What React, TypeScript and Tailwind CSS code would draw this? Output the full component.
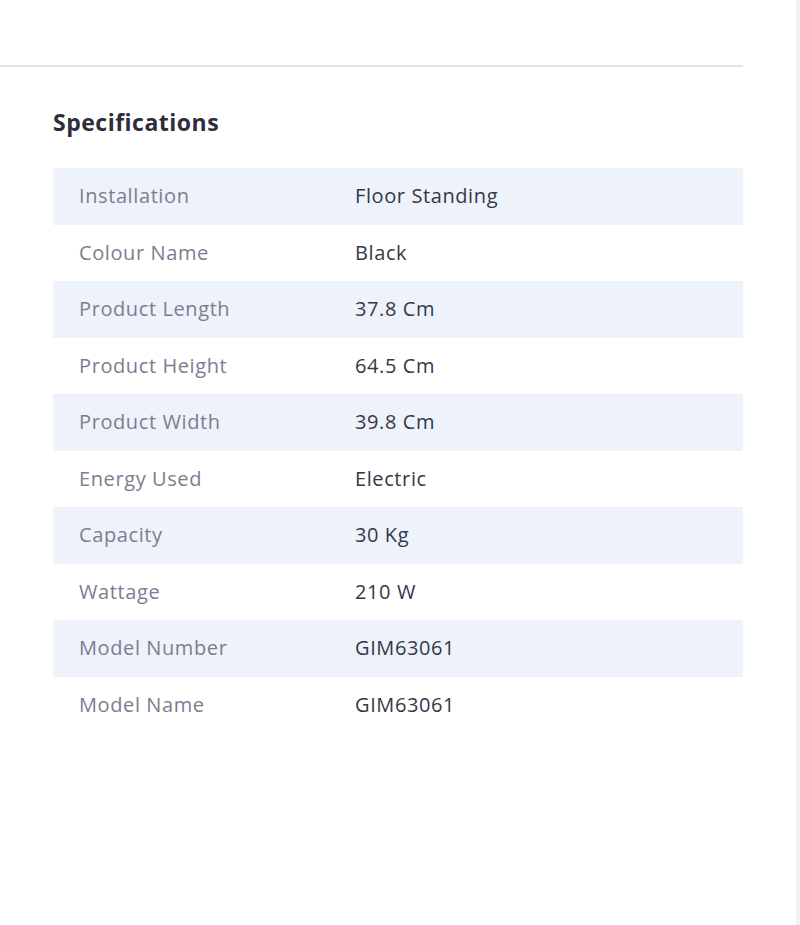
import React from 'react';

const specs: [string, string][] = [
    ['Installation', 'Floor Standing'],
    ['Colour Name', 'Black'],
    ['Product Length', '37.8 Cm'],
    ['Product Height', '64.5 Cm'],
    ['Product Width', '39.8 Cm'],
    ['Energy Used', 'Electric'],
    ['Capacity', '30 Kg'],
    ['Wattage', '210 W'],
    ['Model Number', 'GIM63061'],
    ['Model Name', 'GIM63061'],
];

export default function App() {
    return (
        <div className="flex h-[925px] w-[800px] bg-white font-['Open_Sans',sans-serif]">
            <div className="flex-1">
                {/* top divider */}
                <div className="h-[65px]" />
                <div className="h-[2px] w-[743px] bg-[#e1e3ea]" />

                <section className="w-[743px] pl-[53px] pt-[40px]">
                    <h2 className="text-[23px] font-bold leading-[30px] tracking-[0.5px] text-[#2c2e3b]">
                        Specifications
                    </h2>

                    <div className="mt-[31px]">
                        {specs.map(([label, value], i) => (
                            <div
                                key={label}
                                className={`flex h-[56.5px] items-center text-[20px] tracking-[0.6px] ${i % 2 === 0 ? 'bg-[#eef2fb]' : 'bg-white'}`}
                            >
                                <span className="w-[302px] pl-[26px] text-[#7b7e8e]">{label}</span>
                                <span className="text-[#353846]">{value}</span>
                            </div>
                        ))}
                    </div>
                </section>
            </div>

            {/* scrollbar strip */}
            <div className="w-[4px] bg-[#f2f2f2]" />
        </div>
    );
}
